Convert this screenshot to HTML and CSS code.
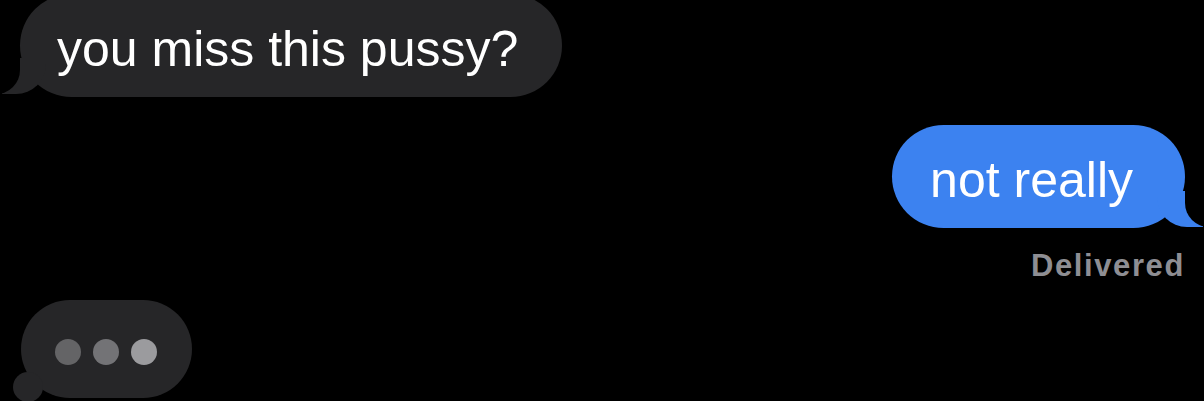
FILE: index.html
```html
<!DOCTYPE html>
<html lang="en">
<head>
    <meta charset="UTF-8">
    <meta name="viewport" content="width=device-width, initial-scale=1.0">
    <title>Messages</title>
    <link rel="stylesheet" href="styles.css">
</head>
<body>
    <div class="thread">
        <div class="bubble them first">you miss this pussy?</div>
        <div class="bubble me">not really</div>
        <div class="status">Delivered</div>
        <div class="typing">
            <span class="dot dot1"></span>
            <span class="dot dot2"></span>
            <span class="dot dot3"></span>
        </div>
    </div>
</body>
</html>
```

FILE: styles.css
```css
body {
    margin: 0;
    background: #000;
    font-family: 'Liberation Sans', Arial, sans-serif;
    height: 401px;
    overflow: hidden;
}
.thread {
    display: flex;
    flex-direction: column;
    padding: 0 19px 0 20px;
}
.bubble {
    position: relative;
    font-size: 50px;
    line-height: 58px;
    color: #fff;
    padding: 26px 44px 19px 37px;
    border-radius: 52px;
    white-space: nowrap;
}
.them {
    align-self: flex-start;
    background: #262628;
}
.first { margin-top: -6px; }
.me {
    align-self: flex-end;
    background: #3c82f0;
    margin-top: 28px;
    padding: 26px 52px 19px 38px;
}
.bubble::before,
.bubble::after {
    content: "";
    position: absolute;
}
.them::before {
    left: -18px;
    bottom: 3px;
    width: 44px;
    height: 36px;
    background: #262628;
    border-bottom-right-radius: 30px;
    z-index: 0;
}
.them::after {
    left: -30px;
    bottom: 3px;
    width: 30px;
    height: 40px;
    background: #000;
    border-bottom-right-radius: 24px;
    z-index: 1;
}
.me::before {
    right: -18px;
    bottom: 1px;
    width: 46px;
    height: 36px;
    background: #3c82f0;
    border-bottom-left-radius: 30px;
    z-index: 0;
}
.me::after {
    right: -30px;
    bottom: 1px;
    width: 30px;
    height: 40px;
    background: #000;
    border-bottom-left-radius: 24px;
    z-index: 1;
}
.status {
    align-self: flex-end;
    margin-top: 20px;
    margin-right: 0;
    font-size: 31px;
    line-height: 36px;
    font-weight: bold;
    letter-spacing: 1.6px;
    color: #8e8e93;
}
.typing {
    position: relative;
    align-self: flex-start;
    margin: 16px 0 0 1px;
    height: 98px;
    padding: 0 35px 0 34px;
    display: flex;
    align-items: center;
    gap: 12px;
    background: #262628;
    border-radius: 49px;
}
.typing::after {
    content: "";
    position: absolute;
    left: -8px;
    top: 72px;
    width: 30px;
    height: 30px;
    border-radius: 50%;
    background: #262628;
}
.dot {
    width: 26px;
    height: 26px;
    border-radius: 50%;
    margin-top: 6px;
}
.dot1 { background: #646466; }
.dot2 { background: #737376; }
.dot3 { background: #9b9b9e; }
```
